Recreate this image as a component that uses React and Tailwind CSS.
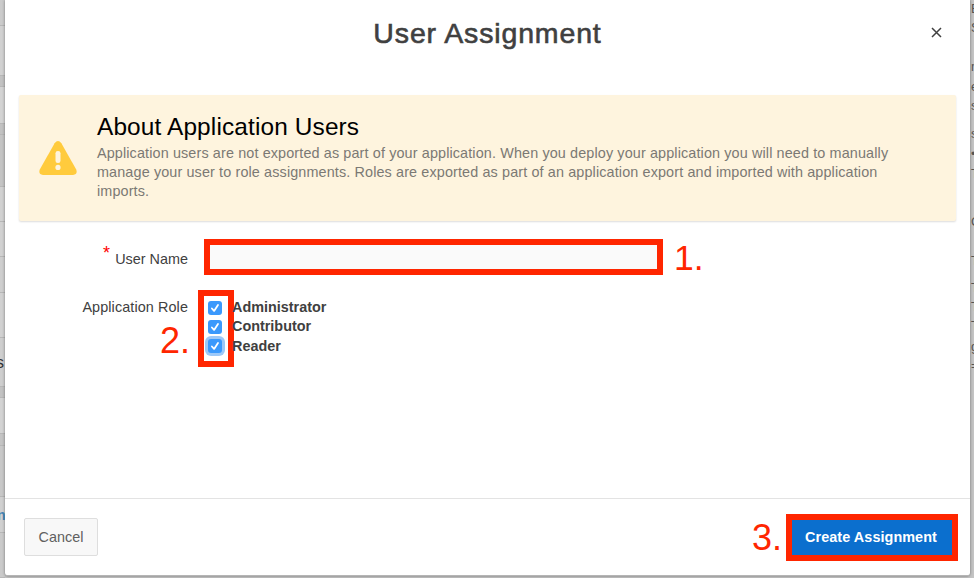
import React from "react";

const roles = ["Administrator", "Contributor", "Reader"];

const leftRows = [
  "h-[26px] bg-[#cbcbcb]",
  "h-[50px] bg-[#d1d1d1]",
  "h-[11px] bg-[#c2c2c2]",
  "h-[37px] bg-[#d3d3d3]",
  "h-[11px] bg-[#c2c2c2]",
  "h-[52px] bg-[#c4c4c4]",
  "h-[35px] bg-[#d1d1d1]",
  "h-[35px] bg-[#d1d1d1]",
  "h-[36px] bg-[#cecece]",
  "h-[45px] bg-[#d1d1d1]",
  "h-[49px] bg-[#cecece]",
  "h-[11px] bg-[#c2c2c2]",
  "h-[36px] bg-[#d3d3d3]",
  "h-[12px] bg-[#c4c4c4]",
  "h-[51px] bg-[#c8c8c8]",
  "h-[36px] bg-[#d0d0d0]",
  "h-[45px] bg-[#cacaca]",
];

const rightMarks = [
  ["E", "top-[1px]"], ["S", "top-[20px]"], ["m", "top-[59px]"], ["e", "top-[79px]"],
  ["s", "top-[98px]"], ["s", "top-[126px]"], ["•", "top-[146px]"], ["T", "top-[166px]"],
  ["C", "top-[214px]"], ["T", "top-[253px]"], ["T", "top-[280px]"], ["T", "top-[299px]"],
  ["T", "top-[318px]"], ["g", "top-[339px]"], ["=", "top-[358px]"],
];

function Check({ focused }) {
  return (
    <span
      className={
        "flex size-[14px] items-center justify-center rounded-[3px] bg-[#3b99fc] " +
        (focused ? "shadow-[0_0_0_3px_#9cc8f8]" : "")
      }
    >
      <svg viewBox="0 0 14 14" className="size-[14px]" fill="none" stroke="white" strokeWidth="1.8" strokeLinecap="round" strokeLinejoin="round">
        <path d="M3.9 7.5 L6.1 9.9 L10 4" />
      </svg>
    </span>
  );
}

export default function App() {
  return (
    <div className="relative flex h-[578px] w-[974px] overflow-hidden bg-[#c4c4c4] font-['Liberation_Sans',Arial,sans-serif] text-[14.4px] text-[#404040]">
      <div className="relative flex w-[5px] shrink-0 flex-col overflow-hidden">
        {leftRows.map((row, i) => (
          <div key={i} className={"shrink-0 border-b border-[#b7b7b7] " + row} />
        ))}
        <span className="absolute top-[354px] left-[-4px] text-[16px] leading-[18px] text-[#333]">s</span>
        <span className="absolute top-[507px] left-[-3px] text-[14px] leading-[16px] font-bold text-[#4786b6]">n</span>
      </div>

      <main className="z-10 flex h-[576px] w-[965px] shrink-0 flex-col rounded-b-[3px] border-b border-[#b5b5b5] bg-white shadow-[0_0_3px_rgba(0,0,0,0.45)]">
        <header className="relative flex h-[95px] justify-center pt-[16px]">
          <h1 className="text-[28.5px] leading-[34px] tracking-[0.86px] whitespace-nowrap [-webkit-text-stroke:0.6px_#404040]">User Assignment</h1>
          <button aria-label="Close" className="absolute top-[27px] right-[28px] size-[11px]">
            <svg viewBox="0 0 11 11" className="size-[11px]" stroke="#404040" strokeWidth="1.5">
              <path d="M1 1 L10 10 M10 1 L1 10" />
            </svg>
          </button>
        </header>

        <section className="mx-[14px] flex h-[126px] items-start rounded-[2px] bg-[#fef4de] pt-[18px] shadow-[0_1px_2px_rgba(0,0,0,0.14)]">
          <svg viewBox="0 0 38 34" className="mt-[28px] ml-[20px] h-[34px] w-[38px] shrink-0">
            <path d="M15.6 2.2 Q19 -2 22.4 2.2 L37.2 28.5 Q39 33.5 34 34 H4 Q-1 33.5 0.8 28.5 Z" fill="#ffcb3d" />
            <rect x="16.5" y="10" width="5" height="12" rx="2.3" fill="#fef4de" />
            <circle cx="19" cy="26.4" r="2.6" fill="#fef4de" />
          </svg>
          <div className="ml-[20px]">
            <h2 className="text-[24.4px] leading-[28px] tracking-[0.14px] whitespace-nowrap text-black">About Application Users</h2>
            <p className="mt-[3px] text-[14.4px] leading-[19.2px] tracking-[0.125px] whitespace-nowrap text-[#7b7974]">
              Application users are not exported as part of your application. When you deploy your application you will need to manually
              <br />
              manage your user to role assignments. Roles are exported as part of an application export and imported with application
              <br />
              imports.
            </p>
          </div>
        </section>

        <form className="relative flex grow flex-col pt-[18px]">
          <div className="flex h-[36px] items-center">
            <label className="relative w-[183px] pt-[3px] text-right leading-[18px]">
              <span className="absolute top-[-3px] left-[98px] text-[18px] leading-[18px] text-[#f00]">*</span>
              User Name
            </label>
            <div className="ml-[16px] h-[36px] w-[459px] border-6 border-[#ff2600] bg-[#fafafa]" />
            <span className="mt-[1px] ml-[11px] text-[35.5px] leading-[36px] text-[#ff2600]">1.</span>
          </div>
          <div className="mt-[15px] flex items-start">
            <span className="mt-[8px] w-[183px] text-right leading-[18px] tracking-[0.1px]">Application Role</span>
            <div className="relative ml-[10px] h-[77px] w-[36px] border-6 border-[#ff2600] bg-white">
              <div className="flex flex-col gap-[5px] pt-[5px] pl-[4px]">
                {roles.map((role) => (
                  <Check key={role} focused={role === "Reader"} />
                ))}
              </div>
            </div>
            <div className="z-10 mt-[8px] ml-[-2px] flex flex-col leading-[19.3px] font-bold">
              {roles.map((role) => (
                <span key={role}>{role}</span>
              ))}
            </div>
          </div>
          <span className="absolute top-[102px] left-[155px] text-[36px] leading-[36px] text-[#ff2600]">2.</span>
        </form>

        <footer className="flex h-[77px] shrink-0 items-start justify-between border-t border-[#e3e3e3] pr-[12px] pl-[19px]">
          <button className="mt-[19px] h-[38px] w-[74px] rounded-[2px] border border-[#dedede] bg-[#f8f8f8] pt-[1px] text-[14.4px] text-[#606060]">Cancel</button>
          <div className="mt-[15px] flex items-center">
            <span className="mr-[4px] text-[36px] leading-[36px] text-[#ff2600]">3.</span>
            <button className="h-[47px] w-[172px] border-6 border-[#ff2600] bg-[#0b6fce] pr-[2px] text-[14.4px] font-bold tracking-[0.07px] whitespace-nowrap text-white">Create Assignment</button>
          </div>
        </footer>
      </main>

      <div className="relative w-[4px] shrink-0 overflow-hidden">
        {rightMarks.map(([mark, top]) => (
          <span key={top} className={"absolute left-[1px] text-[13px] leading-[15px] text-[#555] " + top}>{mark}</span>
        ))}
      </div>
    </div>
  );
}
